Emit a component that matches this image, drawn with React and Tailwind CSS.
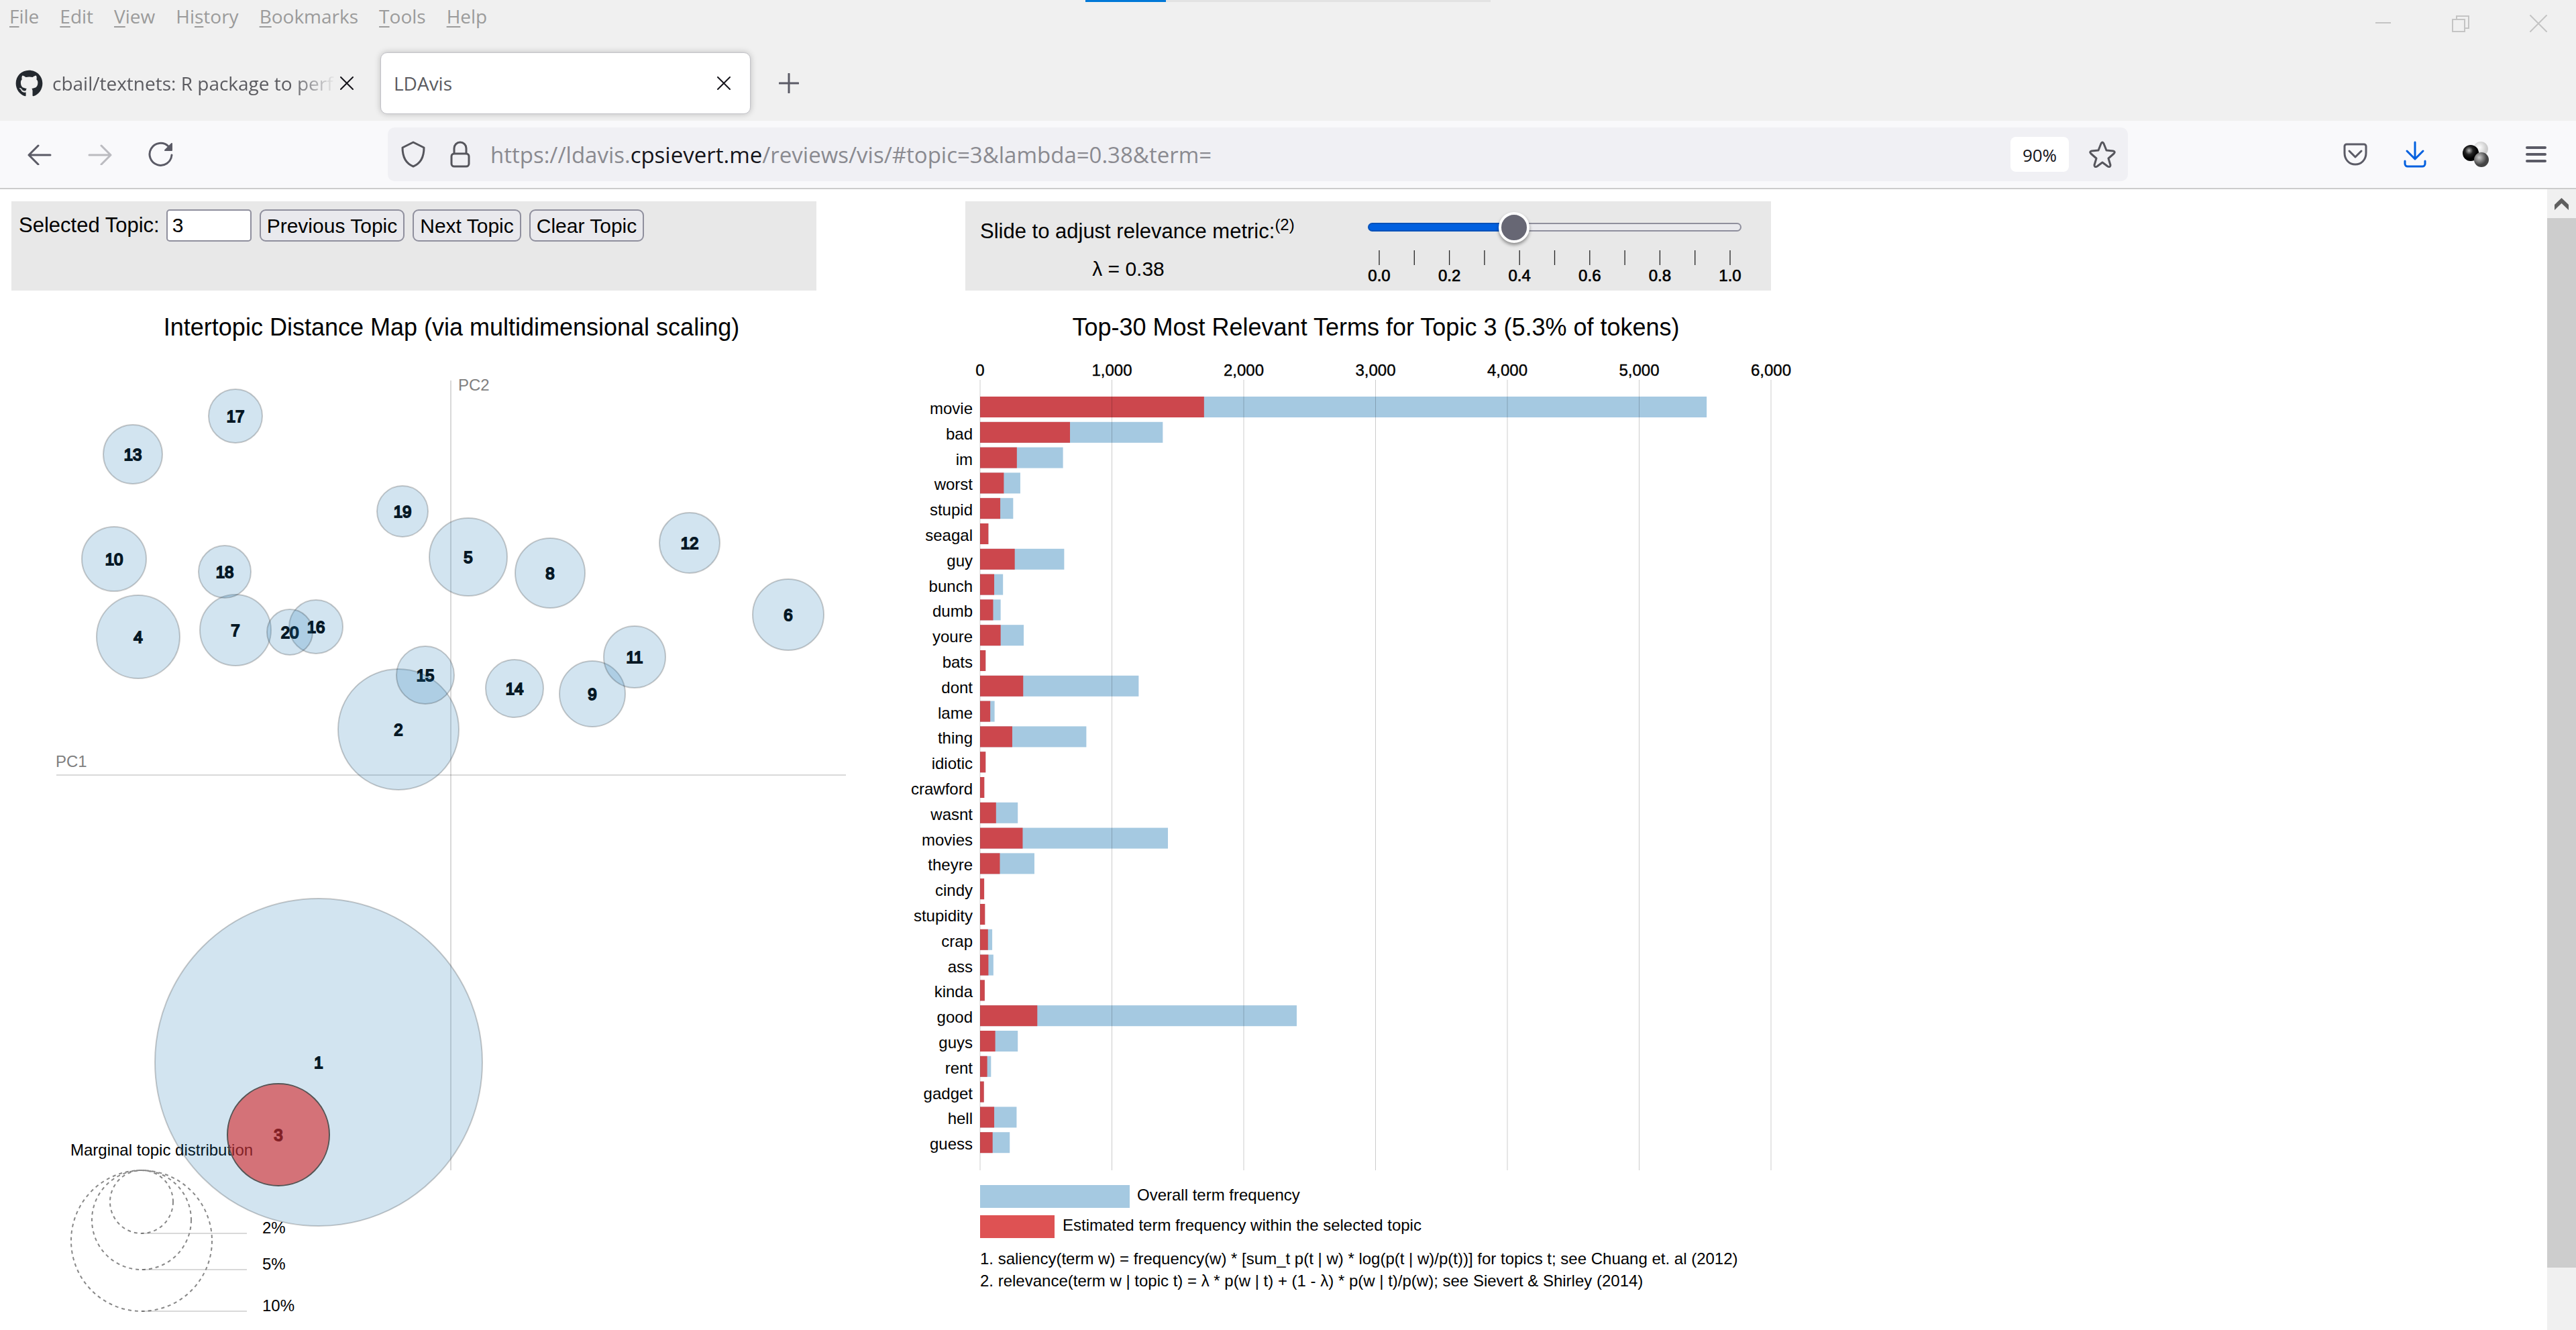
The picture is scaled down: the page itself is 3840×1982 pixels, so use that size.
import React from "react";
import { FaGithub } from "react-icons/fa";

const MENU = [
  ["", "F", "ile"],
  ["", "E", "dit"],
  ["", "V", "iew"],
  ["Hi", "s", "tory"],
  ["", "B", "ookmarks"],
  ["", "T", "ools"],
  ["", "H", "elp"],
];

const TERMS = [
  ["movie", 5512, 1699], ["bad", 1386, 682], ["im", 629, 279], ["worst", 305, 180],
  ["stupid", 251, 153], ["seagal", 63, 63], ["guy", 638, 263], ["bunch", 174, 107],
  ["dumb", 156, 99], ["youre", 331, 156], ["bats", 42, 42], ["dont", 1203, 327],
  ["lame", 110, 77], ["thing", 806, 244], ["idiotic", 42, 42], ["crawford", 32, 32],
  ["wasnt", 286, 121], ["movies", 1425, 323], ["theyre", 412, 150], ["cindy", 31, 31],
  ["stupidity", 37, 37], ["crap", 92, 60], ["ass", 101, 63], ["kinda", 35, 35],
  ["good", 2402, 434], ["guys", 286, 115], ["rent", 83, 54], ["gadget", 29, 29],
  ["hell", 277, 107], ["guess", 225, 95],
];

const TOPICS = [
  [1, 475, 1583, 244], [2, 594, 1087, 90], [4, 206, 949, 62], [5, 698, 830, 58],
  [6, 1175, 916, 53], [7, 351, 939, 53], [8, 820, 854, 52], [9, 883, 1034, 49],
  [10, 170, 833, 48], [11, 946, 979, 46], [12, 1028, 809, 45], [13, 198, 677, 44],
  [14, 767, 1026, 43], [15, 634, 1006, 43], [16, 471, 934, 40], [17, 351, 620, 40],
  [18, 335, 852, 39], [19, 600, 762, 38], [20, 432, 942, 34], [3, 415, 1691, 76],
];

const LEGEND = [["2%", 47], ["5%", 74], ["10%", 105]];

const X0 = 1461;
const PER_TERM = 0.1965;

function Stroke({ w, h, box, sw = 2, children, className = "" }) {
  return (
    <svg width={w} height={h} viewBox={box} fill="none" stroke="currentColor" strokeWidth={sw}
      strokeLinecap="round" strokeLinejoin="round" className={className} aria-hidden="true">
      {children}
    </svg>
  );
}

const Close = () => (
  <Stroke w={20} h={20} box="0 0 20 20">
    <path d="M1 1 19 19M19 1 1 19" />
  </Stroke>
);

function TitleBar() {
  return (
    <div className="flex h-[68px] items-start justify-between">
      <nav className="flex gap-[31px] pl-[14px] pt-1.5 text-[28px] leading-9 text-[#9b9b9b]">
        {MENU.map(([a, b, c]) => (
          <button key={a + b + c} type="button">
            {a}<span className="underline decoration-2 underline-offset-4">{b}</span>{c}
          </button>
        ))}
      </nav>
      <div className="flex gap-[90px] pr-[43px] pt-[22px] text-[#c4c4c4]">
        <button type="button" aria-label="Minimize">
          <Stroke w={25} h={26} box="0 0 25 26"><path d="M1 12H24" strokeLinecap="butt" /></Stroke>
        </button>
        <button type="button" aria-label="Restore">
          <Stroke w={26} h={26} box="0 0 26 26"><path d="M1 7H19V25H1ZM7 7V2H25V20H19" strokeLinejoin="miter" /></Stroke>
        </button>
        <button type="button" aria-label="Close">
          <Stroke w={26} h={26} box="0 0 26 26"><path d="M1 1 25 25M25 1 1 25" /></Stroke>
        </button>
      </div>
    </div>
  );
}

function Tabs() {
  return (
    <div className="flex h-[112px] items-center text-[28px] text-[#5b5b60]">
      <div className="flex h-[92px] w-[567px] items-center pl-[23px]">
        <FaGithub size={41} color="#24292f" />
        <span className="ml-[14px] w-[424px] whitespace-nowrap [mask-image:linear-gradient(to_right,black_84%,transparent)]">
          cbail/textnets: R package to perf
        </span>
        <button type="button" aria-label="Close tab" className="ml-[5px] text-[#15141a]"><Close /></button>
      </div>
      <div className="flex h-[92px] w-[552px] items-center justify-between rounded-[10px] border border-[#c2c2c8] bg-white pl-[19px] pr-[29px] shadow-[0_0_10px_rgba(0,0,0,0.22)]">
        <span>LDAvis</span>
        <button type="button" aria-label="Close tab" className="text-[#15141a]"><Close /></button>
      </div>
      <button type="button" aria-label="New tab" className="ml-[42px] text-[#5b5b66]">
        <Stroke w={30} h={30} box="0 0 30 30" sw={3}><path d="M15 1V29M1 15H29" /></Stroke>
      </button>
    </div>
  );
}

function Toolbar() {
  return (
    <div className="flex h-[102px] items-center border-b-2 border-[#cccccc] bg-[#f9f9fb] text-[#5b5b66]">
      <div className="flex w-[578px] items-center gap-[54px] pl-[41px]">
        <button type="button" aria-label="Back">
          <Stroke w={36} h={32} box="0 0 36 32" sw={3}><path d="M34 17H2M16 3 2 17 16 31" /></Stroke>
        </button>
        <button type="button" aria-label="Forward" className="text-[#bbbbc0]">
          <Stroke w={36} h={32} box="0 0 36 32" sw={3}><path d="M2 17H34M20 3 34 17 20 31" /></Stroke>
        </button>
        <button type="button" aria-label="Reload">
          <Stroke w={37} h={38} box="0 0 37 38" sw={3}>
            <path d="M35 20A16.500 16.500 0 1 1 30 7" />
            <path d="M35 3V13H25Z" fill="currentColor" strokeWidth={2} />
          </Stroke>
        </button>
      </div>
      <div className="flex h-20 w-[2594px] items-center rounded-[10px] bg-[#f0f0f4] pl-5 pr-[18px] text-[#55555c]">
        <Stroke w={36} h={40} box="0 0 36 40" sw={3}>
          <path d="M18 2 34 10C34 25 28 34 18 38C8 34 2 25 2 10Z" />
        </Stroke>
        <Stroke w={30} h={40} box="0 0 30 40" sw={3} className="ml-[37px]">
          <path d="M6 18V11A9 9 0 0 1 24 11V18" /><rect x="2" y="19" width="26" height="19" rx="4" />
        </Stroke>
        <div className="ml-[30px] flex-1 whitespace-nowrap pt-0.5 text-[33px] text-[#8a8a90]">
          https://ldavis.<span className="text-[#15141a]">cpsievert.me</span>/reviews/vis/#topic=3&amp;lambda=0.38&amp;term=
        </div>
        <button type="button" className="h-[52px] w-[87px] rounded-lg bg-white pt-0.5 text-center text-[26px] text-[#15141a]">90%</button>
        <button type="button" aria-label="Bookmark" className="ml-[30px]">
          <Stroke w={40} h={40} box="0 0 40 40" sw={3}>
            <path d="M18 4Q20 0 22 4L26 14 36 15Q40 16 37 19L29 26 32 36Q32 40 28 38L20 32 12 38Q8 40 8 36L11 26 3 19Q0 16 4 15L14 14Z" />
          </Stroke>
        </button>
      </div>
      <div className="ml-auto flex items-center pr-[43px]">
        <button type="button" aria-label="Save to Pocket">
          <Stroke w={36} h={34} box="0 0 36 34" sw={3}>
            <path d="M5 2H31A3 3 0 0 1 34 5V15C34 25 27 32 18 32S2 25 2 15V5A3 3 0 0 1 5 2Z" /><path d="M9 12 18 21 27 12" />
          </Stroke>
        </button>
        <button type="button" aria-label="Downloads" className="ml-[54px] text-[#0060df]">
          <Stroke w={34} h={40} box="0 0 34 40" sw={3}>
            <path d="M17 2V27M5 15 17 27 29 15M2 30V34A4 4 0 0 0 6 38H28A4 4 0 0 0 32 34V30" />
          </Stroke>
        </button>
        <button type="button" aria-label="Extension" className="ml-[54px]">
          <svg width="40" height="40" viewBox="0 0 40 40" aria-hidden="true">
            <defs>
              <radialGradient id="lightBall" cx="0.4" cy="0.4"><stop offset="0" stopColor="#fff" /><stop offset="1" stopColor="#ccc" /></radialGradient>
              <radialGradient id="darkBall" cx="0.4" cy="0.35"><stop offset="0" stopColor="#bbb" /><stop offset="0.5" stopColor="#222" /><stop offset="1" stopColor="#000" /></radialGradient>
              <radialGradient id="greyBall" cx="0.35" cy="0.35"><stop offset="0" stopColor="#ccc" /><stop offset="1" stopColor="#444" /></radialGradient>
            </defs>
            <circle cx="27" cy="12" r="11" fill="url(#lightBall)" />
            <circle cx="12" cy="18" r="12" fill="url(#darkBall)" />
            <circle cx="28" cy="28" r="11" fill="url(#greyBall)" />
          </svg>
        </button>
        <button type="button" aria-label="Menu" className="ml-[54px]">
          <Stroke w={32} h={26} box="0 0 32 26" sw={4}><path d="M2 3H29M2 13H29M2 23H29" /></Stroke>
        </button>
      </div>
    </div>
  );
}

const TOPIC_BUTTON = "h-12 rounded-[9px] border-2 border-[#8f8f9d] bg-[#e9e9ed] px-[9px]";

function TopicControls() {
  return (
    <div className="flex h-[133px] w-[1200px] items-start gap-3 bg-[#e8e8e8] pl-[11px] pt-3 text-[30px]">
      <label className="flex items-center gap-[10px] text-[31px]">
        Selected Topic:
        <input defaultValue="3" className="h-12 w-[127px] rounded-[5px] border-2 border-[#8f8f9d] bg-white px-[7px] text-[30px]" />
      </label>
      <button type="button" className={TOPIC_BUTTON}>Previous Topic</button>
      <button type="button" className={TOPIC_BUTTON}>Next Topic</button>
      <button type="button" className={TOPIC_BUTTON}>Clear Topic</button>
    </div>
  );
}

function RelevanceControls() {
  return (
    <div className="flex h-[133px] w-[1201px] justify-between bg-[#e8e8e8] pl-[22px] pr-[44px] text-[30px]">
      <div className="flex flex-col pt-[21px] leading-[48px]">
        <label htmlFor="lambda" className="h-[56px] whitespace-nowrap text-[31px] leading-[48px]">
          Slide to adjust relevance metric:<sup className="-top-3 text-[24px]">(2)</sup>
        </label>
        <output htmlFor="lambda" className="h-12 w-[442px] text-center">λ = 0.38</output>
      </div>
      <div className="w-[557px] pt-[15px]">
        <input
          id="lambda" type="range" min="0" max="1" step="0.01" defaultValue="0.38"
          className="block h-[46px] w-full appearance-none bg-transparent [&::-webkit-slider-runnable-track]:h-[13px] [&::-webkit-slider-runnable-track]:rounded-[7px] [&::-webkit-slider-runnable-track]:border-2 [&::-webkit-slider-runnable-track]:border-transparent [&::-webkit-slider-runnable-track]:[background:linear-gradient(to_right,#0060df_39%,#e9e9ed_39%)_padding-box,linear-gradient(to_right,#0551b8_39%,#8f8f9d_39%)_border-box] [&::-webkit-slider-thumb]:mt-[-18px] [&::-webkit-slider-thumb]:size-[46px] [&::-webkit-slider-thumb]:appearance-none [&::-webkit-slider-thumb]:rounded-full [&::-webkit-slider-thumb]:border-4 [&::-webkit-slider-thumb]:border-white [&::-webkit-slider-thumb]:bg-[#676774] [&::-webkit-slider-thumb]:shadow-[0_3px_5px_rgba(0,0,0,0.4)]"
        />
        <svg width="557" height="60" className="block overflow-visible" aria-hidden="true">
          {Array.from({ length: 11 }, (_, i) => (
            <line key={i} x1={17 + i * 52.3} x2={17 + i * 52.3} y1="12" y2="34" stroke="#222" strokeWidth="1.3" />
          ))}
          {["0.0", "0.2", "0.4", "0.6", "0.8", "1.0"].map((t, i) => (
            <text key={t} x={17 + i * 104.6} y="58" textAnchor="middle" fontSize="24" stroke="#000" strokeWidth="0.7">{t}</text>
          ))}
        </svg>
      </div>
    </div>
  );
}

function TopicMap() {
  return (
    <svg width="1322" height="1549" viewBox="17 433 1322 1549" fontSize="24" className="block" role="img" aria-label="Intertopic Distance Map">
      <text x="673" y="500" fontSize="36" textAnchor="middle">Intertopic Distance Map (via multidimensional scaling)</text>
      <g stroke="#000" strokeOpacity="0.15" strokeWidth="2">
        <line x1="672" x2="672" y1="567" y2="1744" />
        <line x1="84" x2="1261" y1="1155" y2="1155" />
      </g>
      <text x="683" y="582" fill="#808080">PC2</text>
      <text x="83" y="1143" fill="#808080">PC1</text>
      <text x="105" y="1722">Marginal topic distribution</text>
      {LEGEND.map(([label, r]) => (
        <g key={label}>
          <circle cx="211" cy={1744 + r} r={r} fill="none" stroke="#888" strokeWidth="2" strokeDasharray="5 5" />
          <line x1="211" x2="368" y1={1744 + 2 * r} y2={1744 + 2 * r} stroke="#000" strokeOpacity="0.15" strokeWidth="2" />
          <text x="391" y={1744 + 2 * r}>{label}</text>
        </g>
      ))}
      {TOPICS.map(([n, cx, cy]) => (
        <text key={n} x={cx} y={cy + 9} textAnchor="middle" stroke="#000" strokeWidth="2">{n}</text>
      ))}
      {TOPICS.map(([n, cx, cy, r]) => (
        <circle key={n} cx={cx} cy={cy} r={r}
          fill={n === 3 ? "#d62728" : "#1f77b4"} fillOpacity={n === 3 ? 0.6 : 0.2}
          stroke={n === 3 ? "#555" : "#000"} strokeOpacity={n === 3 ? 1 : 0.2} strokeWidth="2" />
      ))}
    </svg>
  );
}

function TermChart() {
  return (
    <svg width="1201" height="1549" viewBox="1439 433 1201 1549" fontSize="24" className="block overflow-visible" role="img" aria-label="Most relevant terms">
      <text x="2051" y="500" fontSize="36" textAnchor="middle">Top-30 Most Relevant Terms for Topic 3 (5.3% of tokens)</text>
      {TERMS.map(([term, total, inTopic], i) => {
        const y = 591 + i * 37.8;
        return (
          <g key={term}>
            <rect x={X0} y={y} width={total * PER_TERM} height="31" fill="#1f77b4" fillOpacity="0.4" />
            <rect x={X0} y={y} width={inTopic * PER_TERM} height="31" fill="#d62728" fillOpacity="0.8" />
            <text x="1450" y={y + 26} textAnchor="end">{term}</text>
          </g>
        );
      })}
      {["0", "1,000", "2,000", "3,000", "4,000", "5,000", "6,000"].map((t, i) => (
        <g key={t}>
          <line x1={X0 + i * 196.5} x2={X0 + i * 196.5} y1="566" y2="1744" stroke="#000" strokeOpacity="0.2" strokeWidth="1" />
          <text x={X0 + i * 196.5} y="560" textAnchor="middle" stroke="#000" strokeWidth="0.4">{t}</text>
        </g>
      ))}
      <rect x={X0} y="1766" width="223" height="34" fill="#1f77b4" fillOpacity="0.4" />
      <text x="1695" y="1789">Overall term frequency</text>
      <rect x={X0} y="1811" width="111" height="34" fill="#d62728" fillOpacity="0.8" />
      <text x="1584" y="1834">Estimated term frequency within the selected topic</text>
      <text x="1461" y="1884">1. saliency(term w) = frequency(w) * [sum_t p(t | w) * log(p(t | w)/p(t))] for topics t; see Chuang et. al (2012)</text>
      <text x="1461" y="1917">2. relevance(term w | topic t) = λ * p(w | t) + (1 - λ) * p(w | t)/p(w); see Sievert &amp; Shirley (2014)</text>
    </svg>
  );
}

export default function App() {
  return (
    <div className="flex min-h-screen flex-col bg-white">
      <header className="relative bg-[#f0f0f0] font-['Open_Sans',sans-serif]">
        <div className="absolute left-[1618px] top-0 flex h-[3px] w-[604px] bg-[#e3e3e3]">
          <div className="w-[120px] bg-[#0078d7]" />
        </div>
        <TitleBar />
        <Tabs />
        <Toolbar />
      </header>
      <div className="flex flex-1">
        <main className="flex flex-1 items-start pl-[17px] pt-[18px] font-['Liberation_Sans',sans-serif] text-black">
          <section className="w-[1422px]">
            <TopicControls />
            <TopicMap />
          </section>
          <section>
            <RelevanceControls />
            <TermChart />
          </section>
        </main>
        <div className="flex w-[43px] flex-col bg-[#f0f0f0]">
          <button type="button" aria-label="Scroll up" className="flex h-[43px] items-center justify-center">
            <svg width="21" height="18" viewBox="0 0 21 18" fill="#606060" aria-hidden="true"><path d="M10.500 0 21 10V18L10.500 8 0 18V10Z" /></svg>
          </button>
          <div className="h-[1564px] bg-[#cdcdcd]" />
        </div>
      </div>
    </div>
  );
}
